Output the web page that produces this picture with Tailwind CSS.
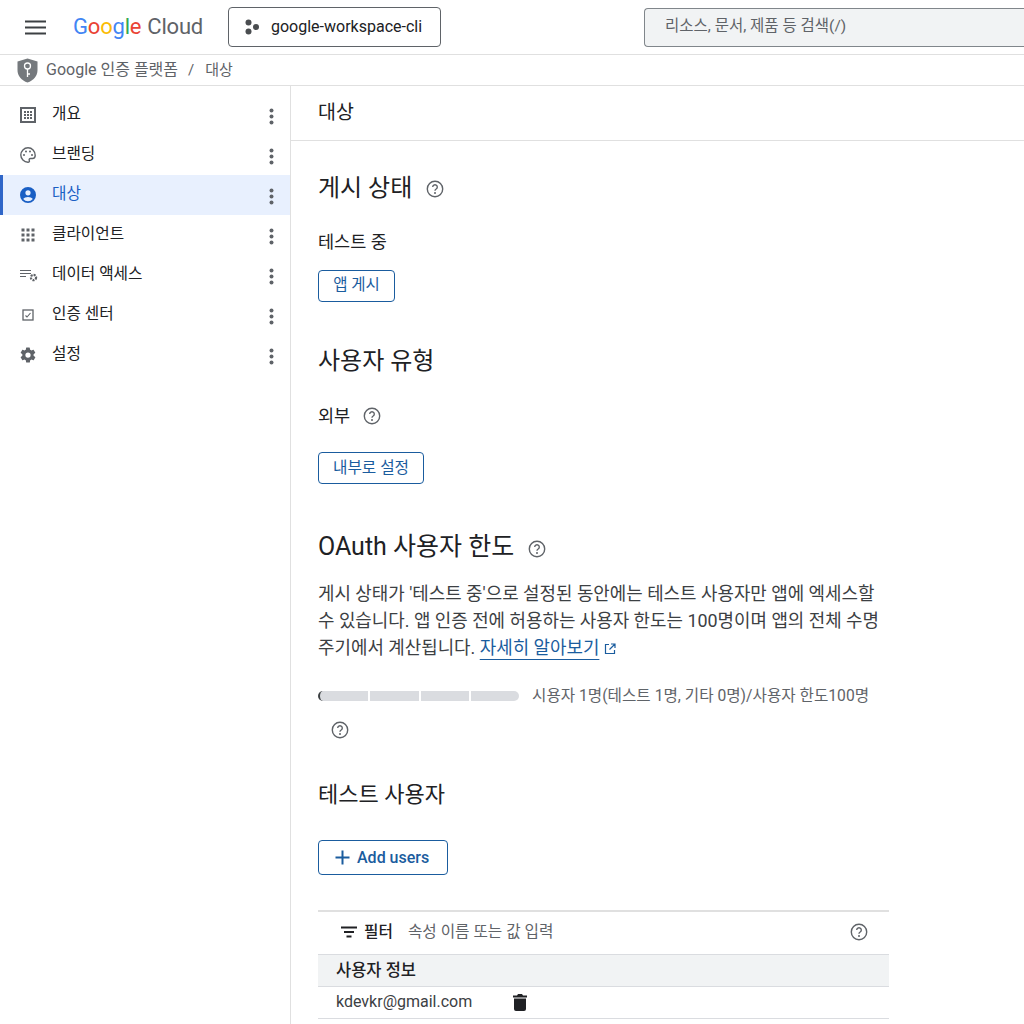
<!DOCTYPE html>
<html lang="ko">
<head>
<meta charset="UTF-8" />
<title>대상</title>
<script src="https://cdn.jsdelivr.net/npm/@tailwindcss/browser@4"></script>
</head>
<body class="bg-white h-[1024px] overflow-hidden font-['Roboto','Noto_Sans_CJK_KR',sans-serif] text-[#202124]">
  <!-- Top bar -->
  <header class="h-[55px] flex items-center border-b border-[#e0e0e0]">
    <svg class="ml-[25px] w-[21px] h-[15px]" viewBox="0 0 21 15"><path d="M0 1.500h21M0 7.500h21M0 13.500h21" stroke="#3c4043" stroke-width="2"/></svg>
    <div class="ml-[27px] w-[130px] flex text-[22px] tracking-[-0.2px] leading-none whitespace-nowrap">
      <span><span class="text-[#4285f4]">G</span><span class="text-[#ea4335]">o</span><span class="text-[#fbbc05]">o</span><span class="text-[#4285f4]">g</span><span class="text-[#34a853]">l</span><span class="text-[#ea4335]">e</span></span>
      <span class="ml-[6px] text-[#5f6368]">Cloud</span>
    </div>
    <div class="ml-[25px] w-[213px] h-[40px] border border-[#5f6368] rounded-[4px] flex items-center">
      <svg class="ml-[15px] w-[16px] h-[16px]" viewBox="0 0 16 16" fill="#4a4d50"><circle cx="4.500" cy="3.500" r="3"/><circle cx="4.500" cy="12.500" r="3"/><circle cx="12" cy="8" r="3"/></svg>
      <span class="ml-[11px] text-[16px] -mt-[1px] text-[#202124] whitespace-nowrap">google-workspace-cli</span>
    </div>
    <div class="ml-[203px] flex-1 h-[39px] border border-[#80868b] border-r-0 rounded-l-[4px] bg-[#f1f3f4] flex items-center pl-[20px] text-[15.500px] text-[#5f6368]">리소스, 문서, 제품 등 검색(/)</div>
  </header>

  <!-- Breadcrumb -->
  <div class="h-[31px] flex items-center border-b border-[#e0e0e0] pl-[17px] text-[#5f6368]">
    <svg class="w-[21px] h-[25px]" viewBox="0 0 21 25"><path d="M10.500 0.500L20.500 3.500V12c0 6-4 10.500-10 12.500C4.500 22.500 0.500 18 0.500 12V3.500z" fill="#75797d"/><circle cx="10.500" cy="8" r="3" fill="none" stroke="#fff" stroke-width="1.300"/><path d="M10.500 11v8M10.500 16h2.500" stroke="#fff" stroke-width="1.300"/></svg>
    <span class="ml-[8px] text-[16px]">Google 인증 플랫폼</span>
    <span class="ml-[10px] text-[15px]">/</span>
    <span class="ml-[11px] text-[15px]">대상</span>
  </div>

  <div class="flex h-[938px]">
    <!-- Sidebar -->
    <nav class="w-[291px] shrink-0 border-r border-[#e0e0e0] pt-[9px]">
      <div class="h-[40px] flex items-center pl-[20px] pr-[16px] text-[15.700px] text-[#202124]">
        <svg class="w-[16px] h-[16px] -mt-[1px]" viewBox="0 0 16 16" fill="none"><rect x="1" y="1" width="14" height="14" stroke="#5f6368" stroke-width="2"/><path d="M4 4h2v2H4zM7 4h2v2H7zM10 4h2v2h-2zM4 7h2v2H4zM7 7h2v2H7zM10 7h2v2h-2zM4 10h2v2H4zM7 10h2v2H7zM10 10h2v2h-2z" fill="#5f6368"/></svg>
        <span class="ml-[16px] flex-1 -mt-[2px]">개요</span>
        <svg class="w-[5px] h-[17px] mt-[2px]" viewBox="0 0 5 17" fill="#5f6368"><circle cx="2.500" cy="2.500" r="2"/><circle cx="2.500" cy="8.500" r="2"/><circle cx="2.500" cy="14.500" r="2"/></svg>
      </div>
      <div class="h-[40px] flex items-center pl-[20px] pr-[16px] text-[15.700px] text-[#202124]">
        <svg class="w-[16px] h-[16px] -mt-[1px]" viewBox="0 0 16 16" fill="none"><path d="M8 0.800a7.200 7.200 0 0 0 0 14.400c1.300 0 1.700-.9 1.300-1.700-.5-1 .1-2 1.200-2h2c1.500 0 2.700-1.200 2.700-3C15.200 4 12 .8 8 .8z" stroke="#5f6368" stroke-width="1.400"/><circle cx="4" cy="8" r="1" fill="#5f6368"/><circle cx="6" cy="4.500" r="1" fill="#5f6368"/><circle cx="10" cy="4.500" r="1" fill="#5f6368"/><circle cx="12" cy="8" r="1" fill="#5f6368"/></svg>
        <span class="ml-[16px] flex-1 -mt-[2px]">브랜딩</span>
        <svg class="w-[5px] h-[17px] mt-[2px]" viewBox="0 0 5 17" fill="#5f6368"><circle cx="2.500" cy="2.500" r="2"/><circle cx="2.500" cy="8.500" r="2"/><circle cx="2.500" cy="14.500" r="2"/></svg>
      </div>
      <div class="h-[40px] flex items-center pl-[17px] pr-[16px] text-[15.700px] text-[#1a5fc4] bg-[#e8f0fe] border-l-[3px] border-[#2f66c8]">
        <svg class="w-[16px] h-[16px] -mt-[1px]" viewBox="0 0 16 16" fill="#1a5fc4"><path d="M8 0a8 8 0 1 0 0 16A8 8 0 0 0 8 0zm0 3.200a2.600 2.600 0 1 1 0 5.200 2.600 2.600 0 0 1 0-5.200zm0 11a6.200 6.200 0 0 1-4.800-2.300c.6-1.300 3-2 4.800-2s4.200.7 4.800 2A6.200 6.200 0 0 1 8 14.200z"/></svg>
        <span class="ml-[16px] flex-1 -mt-[2px]">대상</span>
        <svg class="w-[5px] h-[17px] mt-[2px]" viewBox="0 0 5 17" fill="#5f6368"><circle cx="2.500" cy="2.500" r="2"/><circle cx="2.500" cy="8.500" r="2"/><circle cx="2.500" cy="14.500" r="2"/></svg>
      </div>
      <div class="h-[40px] flex items-center pl-[20px] pr-[16px] text-[15.700px] text-[#202124]">
        <svg class="w-[16px] h-[16px] -mt-[1px]" viewBox="0 0 16 16" fill="#5f6368"><path d="M1.500 1.500h3v3h-3zM6.500 1.500h3v3h-3zM11.500 1.500h3v3h-3zM1.500 6.500h3v3h-3zM6.500 6.500h3v3h-3zM11.500 6.500h3v3h-3zM1.500 11.500h3v3h-3zM6.500 11.500h3v3h-3zM11.500 11.500h3v3h-3z"/></svg>
        <span class="ml-[16px] flex-1 -mt-[2px]">클라이언트</span>
        <svg class="w-[5px] h-[17px] mt-[2px]" viewBox="0 0 5 17" fill="#5f6368"><circle cx="2.500" cy="2.500" r="2"/><circle cx="2.500" cy="8.500" r="2"/><circle cx="2.500" cy="14.500" r="2"/></svg>
      </div>
      <div class="h-[40px] flex items-center pl-[20px] pr-[16px] text-[15.700px] text-[#202124]">
        <svg class="w-[18px] h-[16px] -mr-[2px] -mt-[1px]" viewBox="0 0 18 16" fill="none"><path d="M0 3.500h11M0 6.500h11M0 9.500h6" stroke="#5f6368" stroke-width="1.200"/><circle cx="13.500" cy="10.500" r="2.600" stroke="#5f6368" stroke-width="2.200" stroke-dasharray="2 1"/></svg>
        <span class="ml-[16px] flex-1 -mt-[2px]">데이터 액세스</span>
        <svg class="w-[5px] h-[17px] mt-[2px]" viewBox="0 0 5 17" fill="#5f6368"><circle cx="2.500" cy="2.500" r="2"/><circle cx="2.500" cy="8.500" r="2"/><circle cx="2.500" cy="14.500" r="2"/></svg>
      </div>
      <div class="h-[40px] flex items-center pl-[20px] pr-[16px] text-[15.700px] text-[#202124]">
        <svg class="w-[16px] h-[16px] -mt-[1px]" viewBox="0 0 16 16" fill="none"><rect x="3" y="3" width="10" height="10" stroke="#5f6368" stroke-width="1.300"/><path d="M5.500 8.500L7 10l3.500-4" stroke="#5f6368" stroke-width="1.100"/></svg>
        <span class="ml-[16px] flex-1 -mt-[2px]">인증 센터</span>
        <svg class="w-[5px] h-[17px] mt-[2px]" viewBox="0 0 5 17" fill="#5f6368"><circle cx="2.500" cy="2.500" r="2"/><circle cx="2.500" cy="8.500" r="2"/><circle cx="2.500" cy="14.500" r="2"/></svg>
      </div>
      <div class="h-[40px] flex items-center pl-[19px] pr-[16px] text-[15.700px] text-[#202124]">
        <svg class="w-[18px] h-[18px] -mr-[1px] -mt-[1px]" viewBox="0 0 24 24" fill="#5f6368"><path d="M19.400 13c.04-.3.1-.7.1-1s0-.7-.1-1l2.100-1.600c.2-.15.25-.4.1-.6l-2-3.500c-.1-.2-.4-.3-.6-.2l-2.500 1a7.500 7.500 0 0 0-1.700-1l-.4-2.600A.5.500 0 0 0 14 2h-4a.5.500 0 0 0-.5.400l-.4 2.600c-.6.300-1.200.6-1.700 1l-2.500-1c-.2-.1-.5 0-.6.200l-2 3.500c-.1.200-.1.500.1.600L4.500 11c0 .3-.1.700-.1 1s0 .7.1 1l-2.100 1.600c-.2.200-.25.400-.1.600l2 3.500c.1.200.4.300.6.200l2.500-1c.5.400 1.100.7 1.700 1l.4 2.600c0 .2.200.4.500.4h4c.300 0 .5-.2.500-.4l.4-2.600c.6-.3 1.200-.6 1.700-1l2.500 1c.2.100.5 0 .6-.2l2-3.500c.1-.2.1-.5-.1-.6zM12 15.500a3.500 3.500 0 1 1 0-7 3.500 3.500 0 0 1 0 7z"/></svg>
        <span class="ml-[16px] flex-1 -mt-[2px]">설정</span>
        <svg class="w-[5px] h-[17px] mt-[2px]" viewBox="0 0 5 17" fill="#5f6368"><circle cx="2.500" cy="2.500" r="2"/><circle cx="2.500" cy="8.500" r="2"/><circle cx="2.500" cy="14.500" r="2"/></svg>
      </div>
    </nav>

    <!-- Main -->
    <main class="flex-1 min-w-0">
      <div class="h-[55px] flex items-center pl-[27px] text-[19.500px] border-b border-[#e0e0e0]">대상</div>
      <div class="pl-[27px] w-[598px]">
        <div class="mt-[30px] flex items-center h-[32px]">
          <h2 class="text-[24px] font-normal mt-[2px]">게시 상태</h2>
          <svg class="ml-[14px] w-[18px] h-[18px] mt-[4px]" viewBox="0 0 18 18" fill="none"><circle cx="9" cy="9" r="7.700" stroke="#5f6368" stroke-width="1.400"/><path d="M6.700 7a2.300 2.300 0 1 1 3.500 2c-.8.5-1.200 1-1.200 1.800" stroke="#5f6368" stroke-width="1.400"/><circle cx="9" cy="13" r="1" fill="#5f6368"/></svg>
        </div>
        <p class="mt-[27px] text-[17.500px] leading-[24px]">테스트 중</p>
        <div class="mt-[16px] w-[77px] h-[32px] border border-[#1a5c9e] rounded-[4px] flex items-center justify-center text-[15.500px] text-[#1a5c9e]">앱 게시</div>

        <h2 class="mt-[43px] text-[24px] leading-[32px] font-normal">사용자 유형</h2>
        <div class="mt-[27px] flex items-center h-[24px]">
          <span class="text-[17.500px]">외부</span>
          <svg class="ml-[13px] w-[18px] h-[18px]" viewBox="0 0 18 18" fill="none"><circle cx="9" cy="9" r="7.700" stroke="#5f6368" stroke-width="1.400"/><path d="M6.700 7a2.300 2.300 0 1 1 3.500 2c-.8.5-1.200 1-1.200 1.800" stroke="#5f6368" stroke-width="1.400"/><circle cx="9" cy="13" r="1" fill="#5f6368"/></svg>
        </div>
        <div class="mt-[24px] w-[106px] h-[32px] border border-[#1a5c9e] rounded-[4px] flex items-center justify-center text-[15.700px] text-[#1a5c9e]">내부로 설정</div>

        <div class="mt-[46px] flex items-center h-[32px]">
          <h2 class="text-[25px] font-normal whitespace-nowrap mt-[2px]">OAuth 사용자 한도</h2>
          <svg class="ml-[14px] w-[18px] h-[18px] mt-[5px]" viewBox="0 0 18 18" fill="none"><circle cx="9" cy="9" r="7.700" stroke="#5f6368" stroke-width="1.400"/><path d="M6.700 7a2.300 2.300 0 1 1 3.500 2c-.8.5-1.200 1-1.200 1.800" stroke="#5f6368" stroke-width="1.400"/><circle cx="9" cy="13" r="1" fill="#5f6368"/></svg>
        </div>
        <p class="mt-[18px] text-[17.900px] leading-[27px] text-[#3c4043] w-[571px]">게시 상태가 '테스트 중'으로 설정된 동안에는 테스트 사용자만 앱에 엑세스할 수 있습니다. 앱 인증 전에 허용하는 사용자 한도는 100명이며 앱의 전체 수명 주기에서 계산됩니다. <a class="text-[#1a5c9e] underline underline-offset-[5px]">자세히 알아보기</a><svg class="inline ml-[5px] w-[12px] h-[12px]" viewBox="0 0 12 12" fill="none"><path d="M5 1.500H1.500v9h9V7M7 1h4v4M11 1L5.500 6.500" stroke="#1a5c9e" stroke-width="1.200"/></svg></p>

        <div class="mt-[23px] flex items-center h-[24px]">
          <div class="w-[201px] h-[10px] rounded-full bg-[#dadce0] flex overflow-hidden border-l-[2px] border-[#3c4043]">
            <span class="flex-1"></span><span class="w-[2px] bg-white"></span><span class="flex-1"></span><span class="w-[2px] bg-white"></span><span class="flex-1"></span><span class="w-[2px] bg-white"></span><span class="flex-1"></span>
          </div>
          <span class="ml-[13px] text-[15.650px] text-[#5f6368] whitespace-nowrap">시용자 1명(테스트 1명, 기타 0명)/사용자 한도100명</span>
        </div>
        <svg class="mt-[13px] ml-[13px] w-[18px] h-[18px]" viewBox="0 0 18 18" fill="none"><circle cx="9" cy="9" r="7.700" stroke="#5f6368" stroke-width="1.400"/><path d="M6.700 7a2.300 2.300 0 1 1 3.500 2c-.8.5-1.200 1-1.200 1.800" stroke="#5f6368" stroke-width="1.400"/><circle cx="9" cy="13" r="1" fill="#5f6368"/></svg>

        <h2 class="mt-[40px] text-[22px] leading-[32px] font-normal">테스트 사용자</h2>
        <div class="mt-[29px] w-[130px] h-[35px] border border-[#1a5c9e] rounded-[4px] flex items-center pl-[16px] text-[16px] text-[#1a5c9e]">
          <svg class="w-[15px] h-[15px]" viewBox="0 0 15 15"><path d="M7.500 0.500v14M0.500 7.500h14" stroke="#1a5c9e" stroke-width="2"/></svg>
          <span class="ml-[7px] font-medium">Add users</span>
        </div>

        <div class="mt-[35px] w-[571px] border-t-2 border-[#e0e0e0]">
          <div class="h-[42px] flex items-center pl-[23px] pr-[21px] pb-[2px] text-[15.700px]">
            <svg class="w-[16px] h-[12px]" viewBox="0 0 16 12"><path d="M0 1.500h16M3 6h10M5.500 10.500h5" stroke="#202124" stroke-width="2"/></svg>
            <span class="ml-[7px] font-medium">필터</span>
            <span class="ml-[15px] flex-1 text-[#5f6368]">속성 이름 또는 값 입력</span>
            <svg class="w-[18px] h-[18px]" viewBox="0 0 18 18" fill="none"><circle cx="9" cy="9" r="7.700" stroke="#5f6368" stroke-width="1.400"/><path d="M6.700 7a2.300 2.300 0 1 1 3.500 2c-.8.5-1.200 1-1.200 1.800" stroke="#5f6368" stroke-width="1.400"/><circle cx="9" cy="13" r="1" fill="#5f6368"/></svg>
          </div>
          <div class="h-[33px] flex items-center pl-[18px] pt-[2px] bg-[#f1f3f4] border-y border-[#dadce0] text-[16.500px] font-medium">사용자 정보</div>
          <div class="h-[32px] flex items-center pl-[18px] border-b border-[#dadce0] text-[16px] text-[#3c4043]">
            <span class="w-[177px] -mt-[2px]">kdevkr@gmail.com</span>
            <svg class="w-[14px] h-[17px]" viewBox="0 0 14 17" fill="#202124"><path d="M5 0h4l1 1.500h4v2H0v-2h4zM1 4.500h12V15a2 2 0 0 1-2 2H3a2 2 0 0 1-2-2z"/></svg>
          </div>
        </div>
      </div>
    </main>
  </div>
</body>
</html>
